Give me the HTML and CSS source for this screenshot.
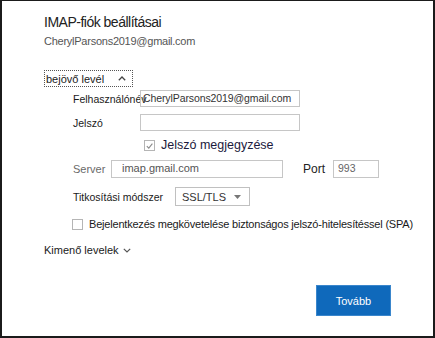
FILE: index.html
```html
<!DOCTYPE html>
<html lang="hu">
<head>
  <meta charset="UTF-8">
  <title>IMAP-fiók beállításai</title>
  <link rel="stylesheet" href="styles.css">
</head>
<body>
  <div class="dialog">
    <h1 class="title">IMAP-fiók beállításai</h1>
    <div class="account">CherylParsons2019@gmail.com</div>

    <!-- incoming mail section -->
    <button class="toggle">
      <span>bejövő levél</span>
      <svg width="8" height="5" viewBox="0 0 8 5"><path d="M0.8 4.2 L4 1 L7.2 4.2" fill="none" stroke="#444" stroke-width="1.3"/></svg>
    </button>

    <div class="fields">
      <div class="row row-user">
        <label class="label w-user">Felhasználónév</label>
        <div class="input input-long">CherylParsons2019@gmail.com</div>
      </div>
      <div class="row row-pass">
        <label class="label w-user">Jelszó</label>
        <div class="input input-long"></div>
      </div>
      <div class="row row-remember">
        <span class="check checked">
          <svg width="10" height="10" viewBox="0 0 10 10"><path d="M2 5.2 L4.2 7.4 L8.2 2.4" fill="none" stroke="#8a8a8a" stroke-width="1.2"/></svg>
        </span>
        <span class="remember">Jelszó megjegyzése</span>
      </div>
      <div class="row row-server">
        <label class="label muted w-server">Server</label>
        <div class="input input-server">imap.gmail.com</div>
        <label class="label port-label">Port</label>
        <div class="input input-port">993</div>
      </div>
      <div class="row row-enc">
        <label class="label w-enc">Titkosítási módszer</label>
        <div class="select">
          <span>SSL/TLS</span>
          <svg width="7" height="4" viewBox="0 0 7 4"><path d="M0 0 L7 0 L3.5 4 Z" fill="#777"/></svg>
        </div>
      </div>
      <div class="row row-spa">
        <span class="check"></span>
        <span class="spa">Bejelentkezés megkövetelése biztonságos jelszó-hitelesítéssel (SPA)</span>
      </div>
    </div>

    <div class="outgoing">
      <span>Kimenő levelek</span>
      <svg width="8" height="5" viewBox="0 0 8 5"><path d="M0.8 0.8 L4 4 L7.2 0.8" fill="none" stroke="#555" stroke-width="1.2"/></svg>
    </div>

    <div class="actions">
      <button class="next">Tovább</button>
    </div>
  </div>
</body>
</html>
```

FILE: styles.css
```css
/* IMAP account settings dialog */
body {
  margin: 0;
  font-family: "Liberation Sans", Arial, sans-serif;
  color: #1a1a1a;
  background: #fff;
}

.dialog {
  box-sizing: border-box;
  width: 435px;
  height: 338px;
  border-top: 1px solid #1b1b1b;
  border-left: 2px solid #1b1b1b;
  border-right: 2px solid #1b1b1b;
  border-bottom: 2px solid #1b1b1b;
  padding: 12px 0 0 42px;
}

.title {
  margin: 0;
  font-size: 14px;
  font-weight: normal;
  line-height: 18px;
  letter-spacing: -0.5px;
  color: #222;
}

.account {
  margin-top: 3px;
  font-size: 11px;
  line-height: 14px;
  color: #555;
  letter-spacing: -0.25px;
}

.toggle {
  display: flex;
  align-items: center;
  justify-content: space-between;
  box-sizing: border-box;
  width: 89px;
  height: 17px;
  margin-top: 22px;
  padding: 0 6px 0 1px;
  border: 1px dotted #555;
  background: #fff;
  font-family: inherit;
  font-size: 11px;
  color: #1a1a1a;
}

.fields {
  padding-left: 29px;
}

.row {
  display: flex;
  align-items: center;
}

.row-user { margin-top: 3px; height: 17px; }
.row-pass { margin-top: 7px; height: 17px; }
.row-remember { margin-top: 7px; height: 14px; padding-left: 71px; }
.row-server { margin-top: 8px; height: 18px; }
.row-enc { margin-top: 9px; height: 19px; }
.row-spa { margin-top: 11px; height: 14px; margin-left: -1px; }

.label {
  font-size: 10.5px;
  white-space: nowrap;
}

.muted { color: #6a6a6a; font-size: 11px; }

.w-user { width: 67px; }
.w-server { width: 38px; }
.w-enc { width: 102px; }

.port-label {
  margin-left: 20px;
  width: 30px;
  font-size: 12px;
  color: #222;
}

.input {
  box-sizing: border-box;
  height: 100%;
  border: 1px solid #c6c6c6;
  padding-left: 4px;
  font-size: 11px;
  line-height: 15px;
  color: #333;
  white-space: nowrap;
  overflow: hidden;
}

.input-long { width: 160px; padding-left: 2px; font-size: 10.5px; letter-spacing: -0.1px; }
.input-server { width: 172px; padding-left: 10px; color: #555; }
.input-port { width: 46px; color: #666; font-size: 10.5px; }

.check {
  display: inline-flex;
  box-sizing: border-box;
  width: 11px;
  height: 11px;
  border: 1px solid #b5b5b5;
  background: #fff;
}

.remember {
  margin-left: 6px;
  font-size: 12.5px;
  color: #1c1a3c;
}

.select {
  display: flex;
  align-items: center;
  justify-content: space-between;
  box-sizing: border-box;
  width: 75px;
  height: 100%;
  padding: 0 8px 0 6px;
  border: 1px solid #c0c0c0;
  font-size: 11px;
  color: #333;
}

.spa {
  margin-left: 6px;
  font-size: 11px;
  letter-spacing: -0.2px;
  color: #1a1a1a;
}

.outgoing {
  display: flex;
  align-items: center;
  gap: 4px;
  margin-top: 13px;
  font-size: 11px;
  color: #1a1a1a;
}

.actions {
  display: flex;
  justify-content: flex-end;
  padding-right: 42px;
  margin-top: 29px;
}

.next {
  width: 75px;
  height: 31px;
  border: 1px solid #3a86cc;
  background: #0f69bb;
  color: #fff;
  font-family: inherit;
  font-size: 11px;
}
```
